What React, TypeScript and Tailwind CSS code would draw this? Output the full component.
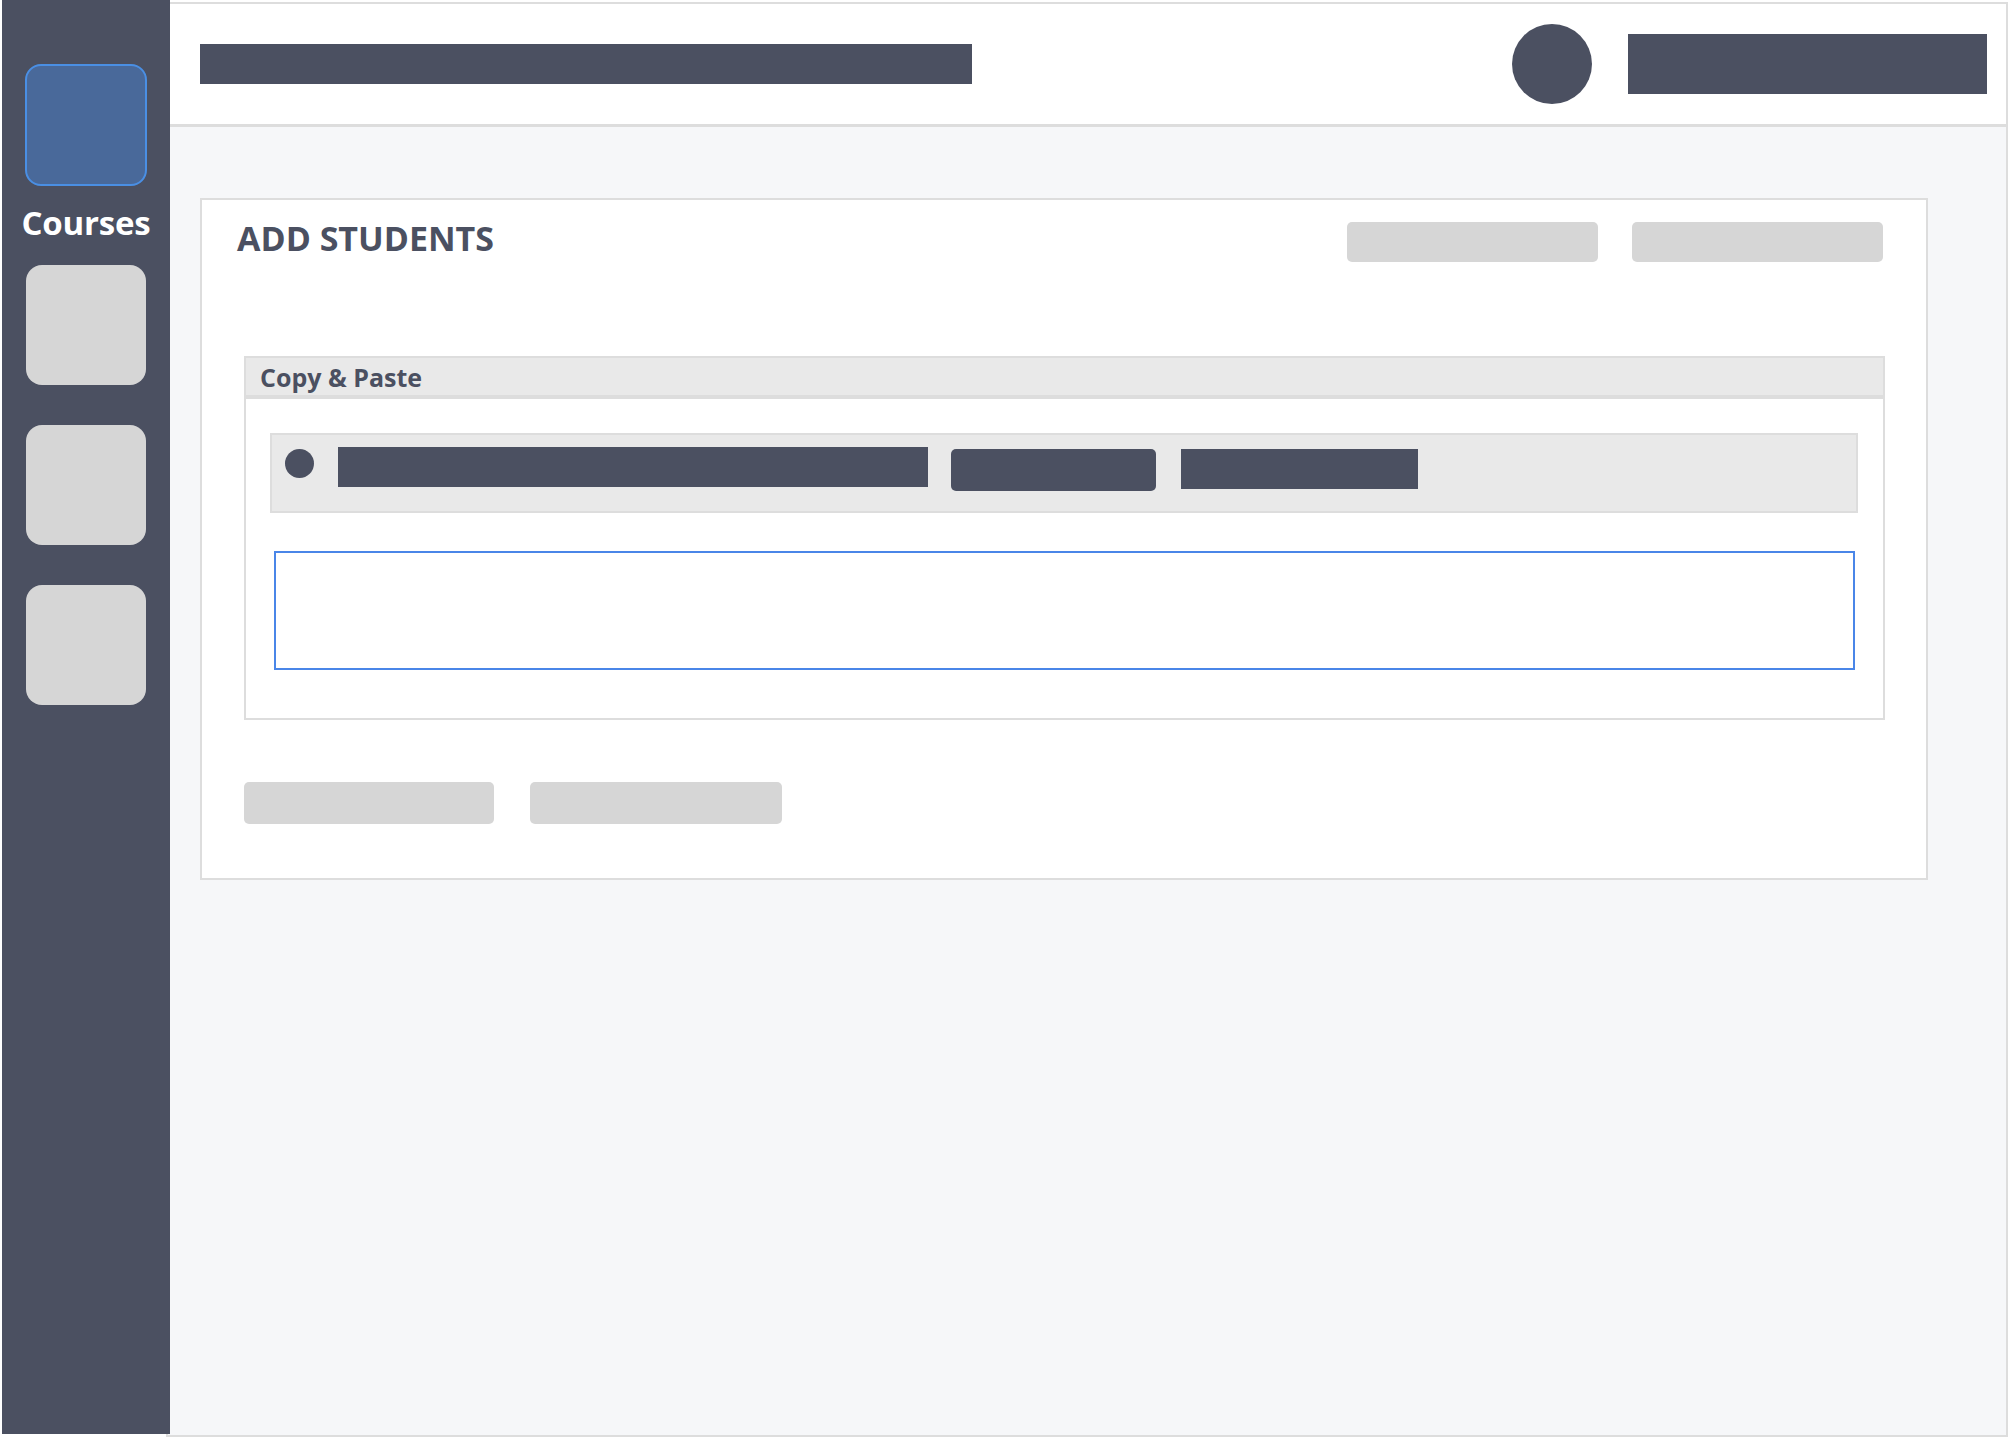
const Sidebar = () => {
  return (
    <aside className="relative z-10 ml-[2px] w-[168px] h-[1434px] shrink-0 bg-[#4b5061] flex flex-col items-center">
      <div className="mt-[64px] w-[122px] h-[122px] rounded-[16px] border-2 border-[#4a8fe4] bg-[#49699a]" />
      <div className="mt-[17px] text-[33px] leading-[40px] font-bold text-white tracking-[-0.2px]">Courses</div>
      <div className="mt-[22px] w-[120px] h-[120px] rounded-[16px] bg-[#d6d6d6]" />
      <div className="mt-[40px] w-[120px] h-[120px] rounded-[16px] bg-[#d6d6d6]" />
      <div className="mt-[40px] w-[120px] h-[120px] rounded-[16px] bg-[#d6d6d6]" />
    </aside>
  );
};

const Header = () => {
  return (
    <header className="h-[123px] shrink-0 bg-white border-b-[3px] border-[#dddddd] flex items-center pl-[32px] pr-[19px]">
      <div className="w-[772px] h-[40px] bg-[#4b5061]" />
      <div className="ml-auto w-[80px] h-[80px] rounded-full bg-[#4b5061]" />
      <div className="ml-[36px] w-[359px] h-[60px] bg-[#4b5061]" />
    </header>
  );
};

const AddStudents = () => {
  return (
    <section className="w-[1728px] h-[682px] border-2 border-[#dddddd] bg-white px-[40px] pt-[21px]">
      <div className="flex items-start">
        <h1 className="ml-[-5px] text-[34px] leading-[34px] font-bold text-[#4b5061]">ADD STUDENTS</h1>
        <div className="ml-auto mr-[3px] mt-[1px] flex gap-[34px]">
          <div className="w-[251px] h-[40px] rounded-[5px] bg-[#d6d6d6]" />
          <div className="w-[251px] h-[40px] rounded-[5px] bg-[#d6d6d6]" />
        </div>
      </div>

      <div className="mt-[94px] ml-[2px] w-[1641px] h-[364px] border-2 border-[#dddddd] flex flex-col">
        <div className="h-[41px] shrink-0 bg-[#e9e9e9] border-b-[4px] border-[#dddddd] overflow-hidden pl-[14px] pt-[7px]">
          <span className="block text-[25px] leading-[25px] font-bold text-[#4b5061]">Copy &amp; Paste</span>
        </div>
        <div className="mt-[34px] ml-[24px] w-[1588px] h-[80px] border-2 border-[#dddddd] bg-[#e9e9e9] flex items-start pl-[13px]">
          <div className="mt-[14px] w-[29px] h-[29px] rounded-full bg-[#4b5061]" />
          <div className="mt-[12px] ml-[24px] w-[590px] h-[40px] bg-[#4b5061]" />
          <div className="mt-[14px] ml-[23px] w-[205px] h-[42px] rounded-[5px] bg-[#4b5061]" />
          <div className="mt-[14px] ml-[25px] w-[237px] h-[40px] bg-[#4b5061]" />
        </div>
        <textarea className="mt-[38px] ml-[28px] w-[1581px] h-[119px] border-2 border-[#4a86e8] bg-white outline-none resize-none" />
      </div>

      <div className="mt-[62px] ml-[2px] flex gap-[36px]">
        <div className="w-[250px] h-[42px] rounded-[5px] bg-[#d6d6d6]" />
        <div className="w-[252px] h-[42px] rounded-[5px] bg-[#d6d6d6]" />
      </div>
    </section>
  );
};

export default function App() {
  return (
    <div
      className="w-[2010px] h-[1438px] bg-white flex overflow-hidden"
      style={{ fontFamily: '"Open Sans", "Noto Sans", sans-serif' }}
    >
      <Sidebar />
      <main className="-ml-[4px] mt-[2px] w-[1842px] h-[1435px] border-2 border-[#dddddd] flex flex-col">
        <Header />
        <div className="flex-1 bg-[#f6f7f9] pl-[32px] pt-[71px]">
          <AddStudents />
        </div>
      </main>
    </div>
  );
}
